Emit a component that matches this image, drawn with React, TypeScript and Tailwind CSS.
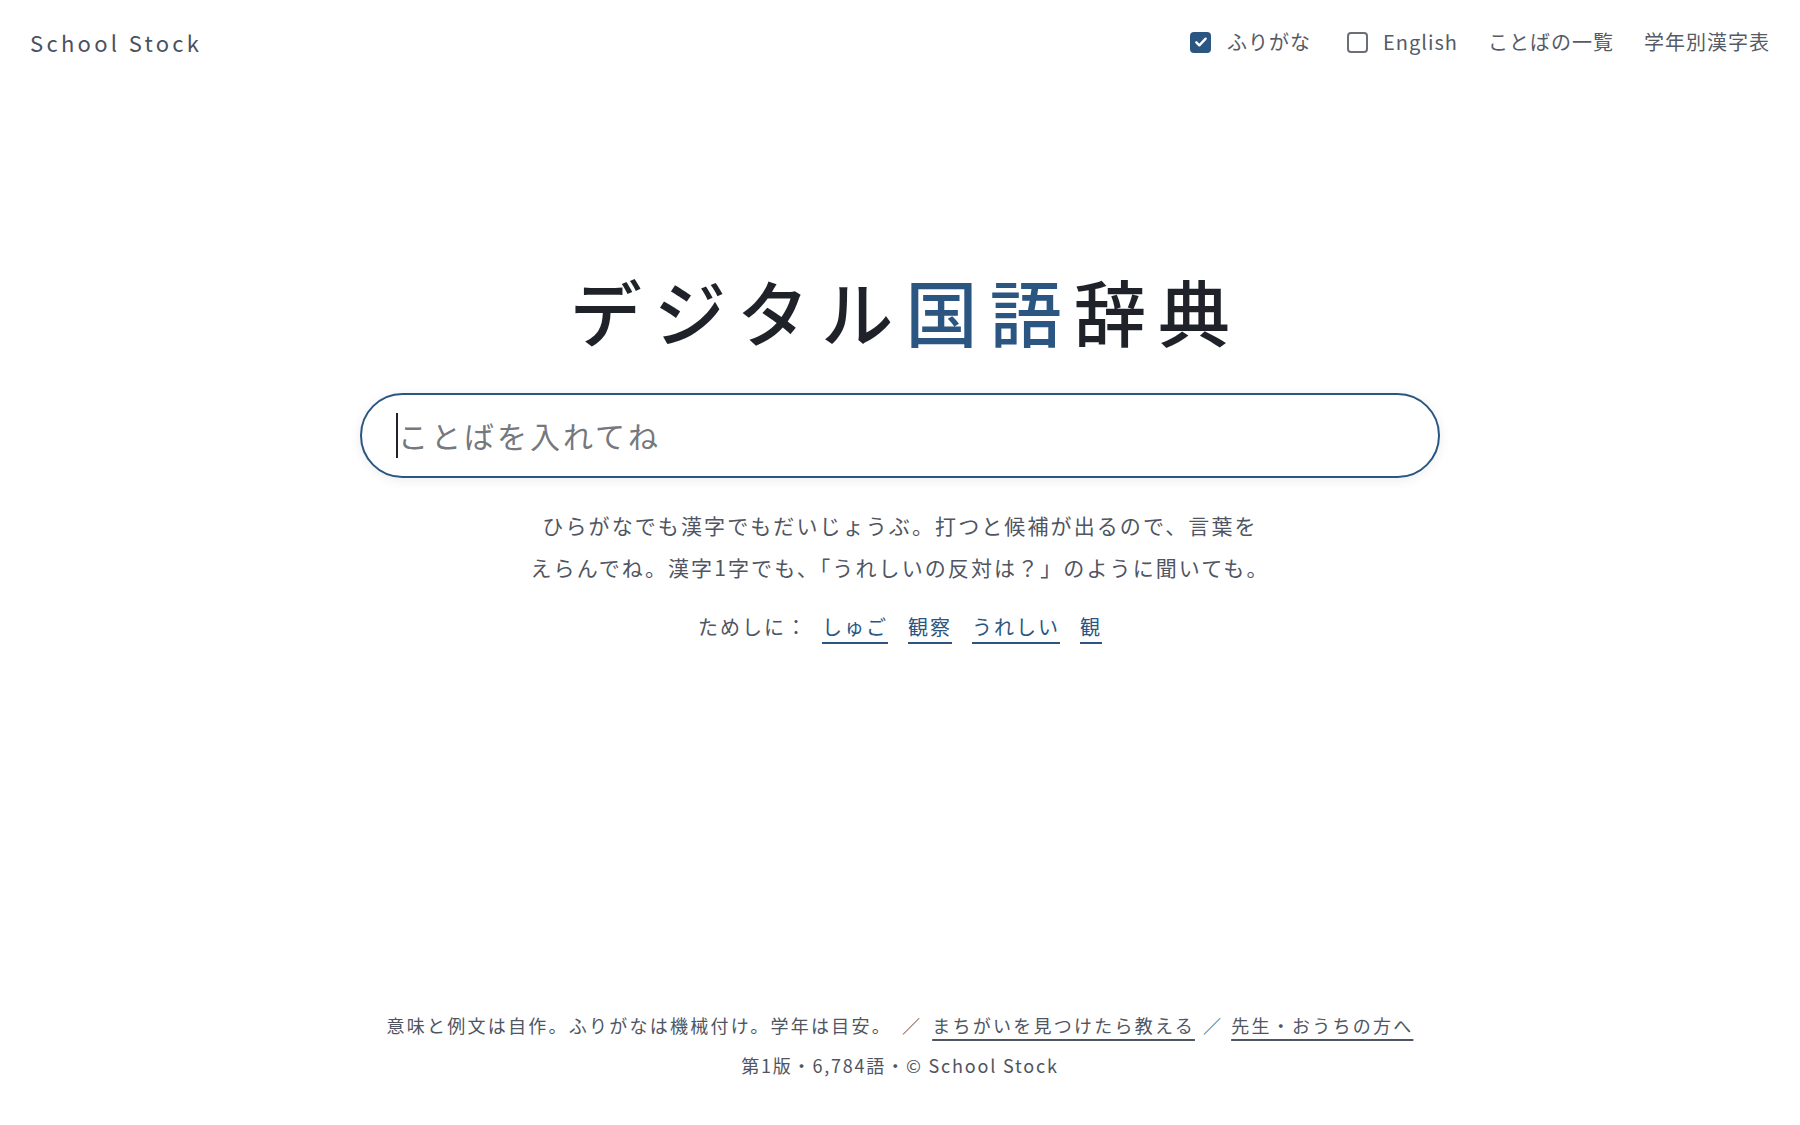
import React from "react";

const font = "font-['Noto_Sans_CJK_JP','Noto_Sans',sans-serif]";

function Checkbox({ checked }: { checked: boolean }) {
  if (checked) {
    return (
      <span className="w-[21px] h-[21px] rounded-[4px] bg-[#2b5682] flex items-center justify-center">
        <svg viewBox="0 0 24 24" className="w-[16px] h-[16px]" fill="none" stroke="white" strokeWidth={3.5} strokeLinecap="round" strokeLinejoin="round">
          <path d="M5 12.5l4.5 4.5L19 7" />
        </svg>
      </span>
    );
  }
  return <span className="w-[21px] h-[21px] rounded-[4px] border-2 border-[#6b7078] bg-white" />;
}

const samples = ["しゅご", "観察", "うれしい", "観"];

export default function App() {
  return (
    <div className={`min-h-screen flex flex-col bg-white ${font}`}>
      {/* Header */}
      <header className="h-[84px] px-[30px] flex items-center justify-between">
        <div className="text-[22px] tracking-[0.15em] text-[#4b5160]">School Stock</div>
        <nav className="flex items-center gap-[30px] text-[20px] tracking-[0.05em] text-[#555b66]">
          <label className="flex items-center gap-[16px]">
            <Checkbox checked />
            <span>ふりがな</span>
          </label>
          <label className="flex items-center gap-[15px] ml-[6px]">
            <Checkbox checked={false} />
            <span>English</span>
          </label>
          <span>ことばの一覧</span>
          <span>学年別漢字表</span>
        </nav>
      </header>

      {/* Main */}
      <main className="flex-1 flex flex-col items-center pt-[183px]">
        <h1 className="text-[72px] leading-[1.2] font-medium tracking-[0.17em] pl-[0.17em] text-[#1f2329]">
          デジタル<span className="text-[#2b5682]">国語</span>辞典
        </h1>

        <div className="relative mt-[40px] w-[1080px] h-[85px] rounded-full border-2 border-[#2b5682] bg-white shadow-[0_2px_12px_rgba(15,23,42,0.08)] flex items-center px-[34px]">
          {/* caret of the focused field */}
          <span className="absolute left-[34px] top-[18px] w-[2px] h-[45px] bg-[#1f2329]" />
          <input
            autoFocus
            placeholder="ことばを入れてね"
            className="w-full bg-transparent outline-none pl-[2px] text-[30px] tracking-[0.1em] text-[#1f2329] caret-[#1f2329] placeholder:text-[#75787d]"
          />
        </div>

        <p className="mt-[26px] text-center text-[21px] leading-[42px] tracking-[0.1em] text-[#4f5562]">
          ひらがなでも漢字でもだいじょうぶ。打つと候補が出るので、言葉を
          <br />
          えらんでね。漢字1字でも、「うれしいの反対は？」のように聞いても。
        </p>

        <div className="mt-[21px] flex items-center text-[20px] leading-[36px] tracking-[0.1em]">
          <span className="text-[#4f5562] mr-[14px]">ためしに：</span>
          <div className="flex items-center gap-[20px]">
            {samples.map((w) => (
              <a
                key={w}
                href="#"
                className="text-[#2b5682] underline decoration-2 underline-offset-[7px] decoration-[#2b5682]"
              >
                {w}
              </a>
            ))}
          </div>
        </div>
      </main>

      {/* Footer */}
      <footer className="pb-[40px] text-center text-[18px] leading-[40px] tracking-[0.125em] text-[#4f5562]">
        <div>
          意味と例文は自作。ふりがなは機械付け。学年は目安。
          <span className="mx-[10px]">／</span>
          <a href="#" className="underline decoration-2 underline-offset-[6px] decoration-[#4f5562]">
            まちがいを見つけたら教える
          </a>
          <span className="mx-[8px]">／</span>
          <a href="#" className="underline decoration-2 underline-offset-[6px] decoration-[#4f5562]">
            先生・おうちの方へ
          </a>
        </div>
        <div className="tracking-[0.1em]">第1版・6,784語・© School Stock</div>
      </footer>
    </div>
  );
}
